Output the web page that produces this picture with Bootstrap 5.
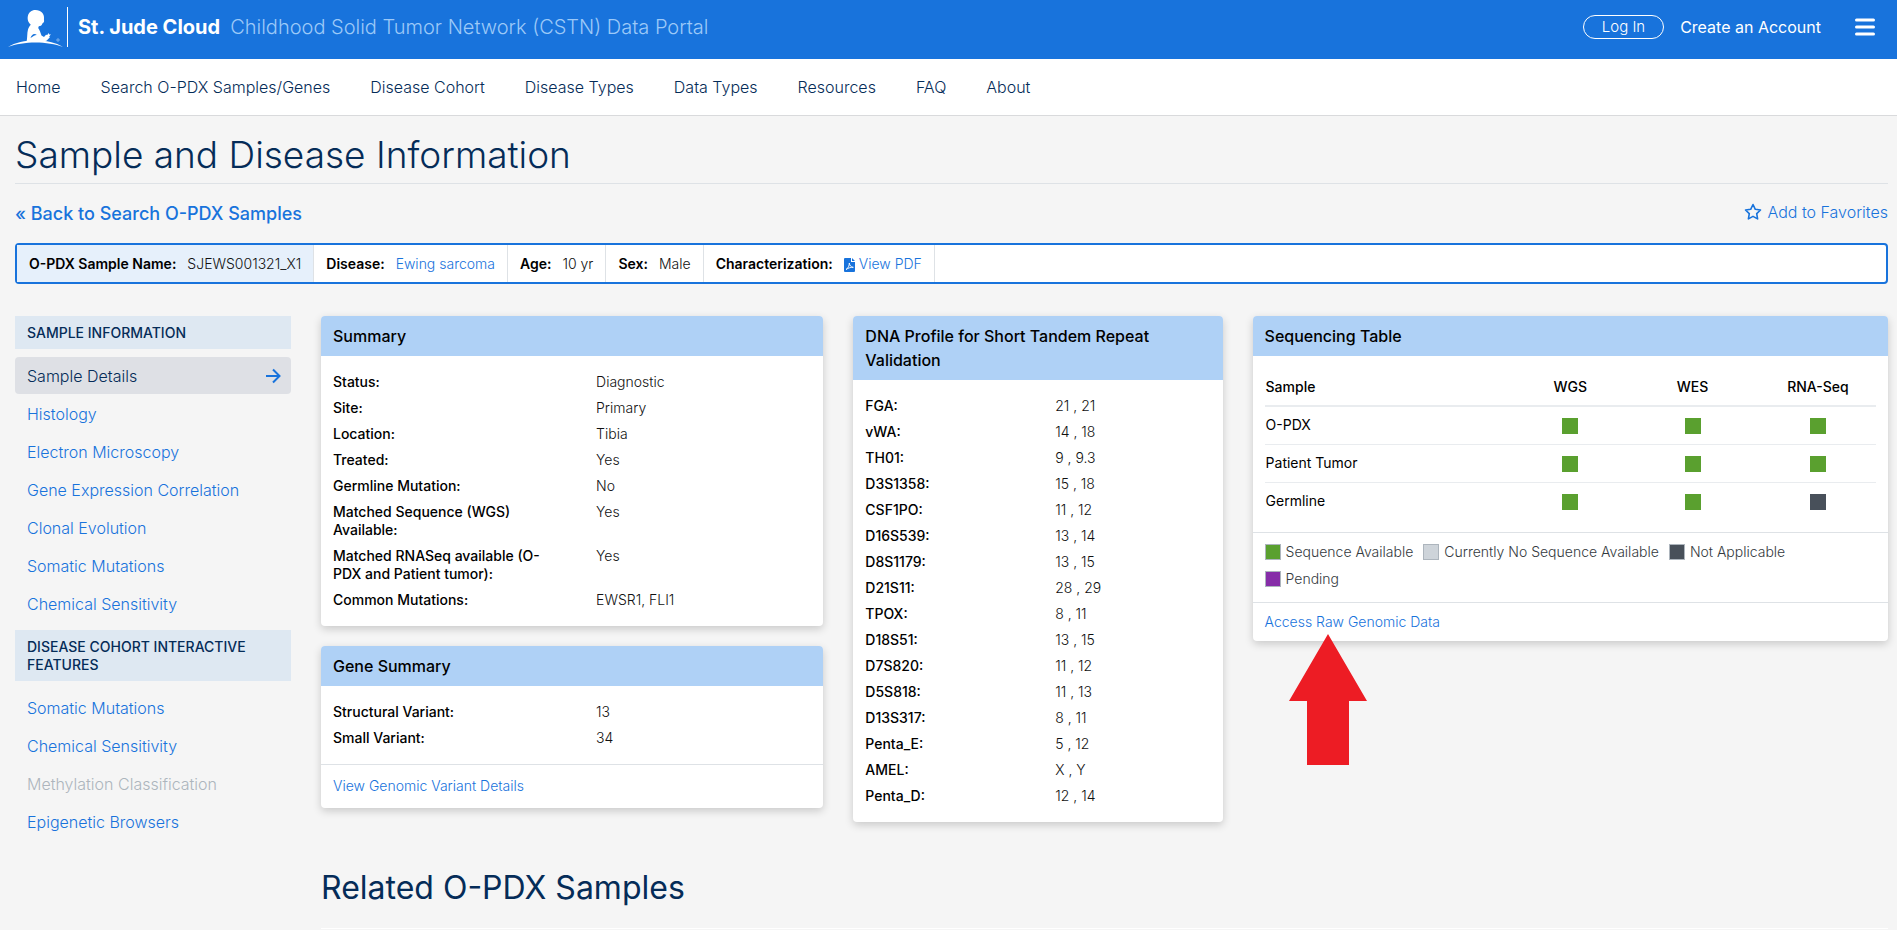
<!DOCTYPE html>
<html lang="en">
<head>
<meta charset="utf-8">
<meta name="viewport" content="width=device-width, initial-scale=1">
<title>Sample and Disease Information</title>
<link href="https://cdn.jsdelivr.net/npm/bootstrap@5.3.0/dist/css/bootstrap.min.css" rel="stylesheet">
<style>
  :root { --sj-blue: #1873dc; --sj-navy: #052c58; }
  body { font-family: Inter, "Noto Sans", sans-serif; font-weight: 300; font-size: 16px; color: #111; background: #f5f5f5; }
  a { color: var(--sj-blue); text-decoration: none; }
  .fs-card { font-size: 14px; line-height: 18px; }
  .topbar { background: var(--sj-blue); height: 59px; padding: 0 22px 5px 8px; }
  .topbar a, .topbar button { color: #fff; }
  .brand { font-size: 20px; font-weight: 700; padding-left: 10px; line-height: 40px; border-left: 1px solid #fff; }
  .brand-sub { font-size: 20px; color: #9cc9f8; margin-left: 10px; }
  .btn-login { border: 1px solid #fff; border-radius: 12px; font-size: 15px; font-weight: 300; line-height: 22px; padding: 0 18px; }
  .btn-menu { border: 0; padding: 0; line-height: 1; }
  .mainnav { height: 57px; border-bottom: 1px solid #d9dadc; padding-left: 16px; gap: 40px; }
  .mainnav a { color: var(--sj-navy); font-size: 16px; }
  .page { padding: 0 9px 0 15px; }
  .page-title { font-size: 37px; font-weight: 300; line-height: 44px; color: var(--sj-navy); padding: 17px 0 6px; margin: 0; border-bottom: 1px solid #dee2e6; }
  .back-link { font-size: 18px; font-weight: 500; line-height: 27px; }
  .fav-link { gap: 5px; line-height: 24px; }
  .samplebar { border: 2px solid var(--sj-blue); border-radius: 4px; background: #fff; margin-bottom: 32px; font-size: 14px; line-height: 21px; }
  .samplebar > div { padding: 8px 12px; border-right: 1px solid #dee2e6; }
  .samplebar > div:first-child { background: #e6f0fb; }
  .samplebar b { font-weight: 600; margin-right: 11px; color: #000; }
  .body-row { gap: 30px; }
  .side { width: 276px; flex: none; }
  .side h2 { font-size: 14px; font-weight: 500; line-height: 18px; color: var(--sj-navy); background: #dee8f2; padding: 8px 12px 7px; margin: 8px 0; }
  .side h2:first-child { margin-top: 0; }
  .side a { display: flex; align-items: center; justify-content: space-between; height: 37px; margin-bottom: 1px; padding: 0 10px 0 12px; border-radius: 4px; }
  .side a.active { background: #dee0e5; color: var(--sj-navy); }
  .side a.disabled { color: #adb5bd; }
  .panels { --bs-gutter-x: 30px; }
  .panel { border: 0; border-radius: 4px; box-shadow: 0 3px 8px rgba(0,0,0,.18); }
  .panel + .panel { margin-top: 20px; }
  .panel > .card-header { background: #afd1f6; border: 0; padding: 8px 12px; font-size: 16px; font-weight: 500; line-height: 24px; color: #000; }
  .panel > .card-header:first-child { border-radius: 4px 4px 0 0; }
  .panel > .card-body { padding: 13px 12px; }
  .panel > .seq-body { padding: 12px; }
  .panel > .card-footer { background: none; border-top: 1px solid #dee2e6; padding: 12px 12px 13px; }
  .panel > .legend { padding: 10px 80px 14px 12px; gap: 9px 10px; color: #343a40; }
  .panel > .raw-link { padding: 10px 12px; }
  .facts { margin: 0; }
  .facts > div { display: flex; padding: 4px 0; }
  .facts dt { width: 55%; padding-right: 44px; font-weight: 500; color: #000; }
  .facts dd { margin: 0; }
  .seq { width: 100%; table-layout: fixed; }
  .seq th, .seq td { height: 38px; text-align: center; vertical-align: middle; font-weight: 400; border-bottom: 1px solid #e9ecef; color: #000; }
  .seq thead th { font-weight: 500; border-bottom: 2px solid #e9ecef; }
  .seq th:first-child { text-align: left; width: 41%; }
  .seq tbody tr:last-child > td, .seq tbody tr:last-child > th { border-bottom: 0; }
  .seq .w-wgs { width: 18%; }
  .seq .w-wes { width: 22%; }
  .swatch { display: inline-block; width: 16px; height: 16px; vertical-align: middle; background: #5aa02f; }
  .swatch.na { background: #48505a; }
  .swatch.none { background: #ced4da; }
  .swatch.pend { background: #862da8; }
  .legend .swatch { border: 1px solid #adb5bd; margin-right: 5px; flex: none; }
  .pointer { position: absolute; left: 36px; top: calc(100% - 7px); }
  .related { font-size: 32px; font-weight: 400; line-height: 40px; color: var(--sj-navy); margin: 46px 0 20px; }
  .related-strip { height: 1px; background: #fff; }
</style>
</head>
<body>
<header class="topbar d-flex align-items-center">
  <a href="#" class="d-flex me-1" aria-label="St. Jude">
    <svg width="55" height="40" viewBox="0 0 55 40" fill="#fff"><path d="M27.500 3C33 3 36.500 7 36 11.500c-.2 1.500.3 2.300 0 3.300-.4 1.200-1.300 1-1.800 2.200-.5 1.500-1.800 2.200-3.400 2.200l-.6 1.800c1.600 2 2.300 5 3.300 7.500l2.500 1.500 2-2.300 1.200.2 1.600-2 .4 1.500 1.600-.2-1.600 2.500.7.600-3.400 3.400-2.500.5C31 34 24 34 18.500 35c1-4 .4-8.500 1.500-12.500.5-2 1.500-3.500 2.800-4.800C17.500 13.500 19 3 27.500 3z"/><path d="M22.500 31c.8-3.500 4-5.500 6.300-3-2.500 0-3.800 1.500-6.300 3z" fill="#1873dc"/><path d="M0 40C14 31 41 31 55 40 40 34 15 34 0 40z"/><circle cx="50" cy="33" r="1.200" fill="none" stroke="#fff" stroke-width=".6" opacity=".7"/></svg>
  </a>
  <a href="#" class="brand">St. Jude Cloud</a>
  <span class="brand-sub">Childhood Solid Tumor Network (CSTN) Data Portal</span>
  <div class="ms-auto d-flex align-items-center">
    <button class="btn btn-login me-3">Log In</button>
    <a href="#" class="fw-normal">Create an Account</a>
    <button class="btn btn-menu ms-4" aria-label="Menu"><svg width="30" height="20" viewBox="0 0 30 20" stroke="#fff" stroke-width="3" stroke-linecap="round"><path d="M11.500 3h17M11.500 10h17M11.500 17h17"/></svg></button>
  </div>
</header>
<nav class="mainnav bg-white d-flex align-items-center">
  <a href="#">Home</a><a href="#">Search O-PDX Samples/Genes</a><a href="#">Disease Cohort</a><a href="#">Disease Types</a><a href="#">Data Types</a><a href="#">Resources</a><a href="#">FAQ</a><a href="#">About</a>
</nav>
<main class="page">
  <h1 class="page-title">Sample and Disease Information</h1>
  <div class="d-flex justify-content-between align-items-start pt-3 pb-3">
    <a href="#" class="back-link">« Back to Search O-PDX Samples</a>
    <a href="#" class="fav-link d-flex align-items-center"><svg width="18" height="18" viewBox="0 0 18 18" fill="none" stroke="#1873dc" stroke-width="1.600" stroke-linejoin="round"><path d="M9 1.500l2.300 4.800 5.200.7-3.800 3.600.9 5.300L9 13.400l-4.600 2.500.9-5.300L1.500 7l5.200-.7z"/></svg>Add to Favorites</a>
  </div>
  <div class="samplebar d-flex flex-wrap">
    <div><b>O-PDX Sample Name:</b>SJEWS001321_X1</div>
    <div><b>Disease:</b><a href="#">Ewing sarcoma</a></div>
    <div><b>Age:</b>10 yr</div>
    <div><b>Sex:</b>Male</div>
    <div><b>Characterization:</b><a href="#"><svg class="me-1" width="11" height="14" viewBox="0 0 11 14"><path fill="#1873dc" d="M1 0h6v4h4v9a1 1 0 0 1-1 1H1a1 1 0 0 1-1-1V1a1 1 0 0 1 1-1zM8 0l3 3H8z"/><path d="M2 11.500c2-1 3.500-4 3.300-6.500.3 2.500 2 4.500 4 4.300-2-.3-5 .7-7.300 2.200z" fill="none" stroke="#fff" stroke-width=".9"/></svg>View PDF</a></div>
  </div>
  <div class="d-flex body-row">
    <aside class="side">
      <h2>SAMPLE INFORMATION</h2>
      <a href="#" class="active">Sample Details<svg width="16" height="16" viewBox="0 0 16 16" fill="none" stroke="#1873dc" stroke-width="2"><path d="M1 8h13M8 1.500L14.500 8 8 14.500"/></svg></a>
      <a href="#">Histology</a>
      <a href="#">Electron Microscopy</a>
      <a href="#">Gene Expression Correlation</a>
      <a href="#">Clonal Evolution</a>
      <a href="#">Somatic Mutations</a>
      <a href="#">Chemical Sensitivity</a>
      <h2>DISEASE COHORT INTERACTIVE FEATURES</h2>
      <a href="#">Somatic Mutations</a>
      <a href="#">Chemical Sensitivity</a>
      <a href="#" class="disabled" aria-disabled="true">Methylation Classification</a>
      <a href="#">Epigenetic Browsers</a>
    </aside>
    <div class="flex-grow-1">
      <div class="row panels align-items-start">
        <div class="col-4">
          <section class="card panel">
            <h2 class="card-header">Summary</h2>
            <div class="card-body fs-card">
              <dl class="facts">
                <div><dt>Status:</dt><dd>Diagnostic</dd></div>
                <div><dt>Site:</dt><dd>Primary</dd></div>
                <div><dt>Location:</dt><dd>Tibia</dd></div>
                <div><dt>Treated:</dt><dd>Yes</dd></div>
                <div><dt>Germline Mutation:</dt><dd>No</dd></div>
                <div><dt>Matched Sequence (WGS) Available:</dt><dd>Yes</dd></div>
                <div><dt>Matched RNASeq available (O-PDX and Patient tumor):</dt><dd>Yes</dd></div>
                <div><dt>Common Mutations:</dt><dd>EWSR1, FLI1</dd></div>
              </dl>
            </div>
          </section>
          <section class="card panel">
            <h2 class="card-header">Gene Summary</h2>
            <div class="card-body fs-card">
              <dl class="facts">
                <div><dt>Structural Variant:</dt><dd>13</dd></div>
                <div><dt>Small Variant:</dt><dd>34</dd></div>
              </dl>
            </div>
            <div class="card-footer fs-card"><a href="#">View Genomic Variant Details</a></div>
          </section>
        </div>
        <div class="col-3">
          <section class="card panel">
            <h2 class="card-header">DNA Profile for Short Tandem Repeat Validation</h2>
            <div class="card-body fs-card">
              <dl class="facts">
                <div><dt>FGA:</dt><dd>21 , 21</dd></div>
                <div><dt>vWA:</dt><dd>14 , 18</dd></div>
                <div><dt>TH01:</dt><dd>9 , 9.3</dd></div>
                <div><dt>D3S1358:</dt><dd>15 , 18</dd></div>
                <div><dt>CSF1PO:</dt><dd>11 , 12</dd></div>
                <div><dt>D16S539:</dt><dd>13 , 14</dd></div>
                <div><dt>D8S1179:</dt><dd>13 , 15</dd></div>
                <div><dt>D21S11:</dt><dd>28 , 29</dd></div>
                <div><dt>TPOX:</dt><dd>8 , 11</dd></div>
                <div><dt>D18S51:</dt><dd>13 , 15</dd></div>
                <div><dt>D7S820:</dt><dd>11 , 12</dd></div>
                <div><dt>D5S818:</dt><dd>11 , 13</dd></div>
                <div><dt>D13S317:</dt><dd>8 , 11</dd></div>
                <div><dt>Penta_E:</dt><dd>5 , 12</dd></div>
                <div><dt>AMEL:</dt><dd>X , Y</dd></div>
                <div><dt>Penta_D:</dt><dd>12 , 14</dd></div>
              </dl>
            </div>
          </section>
        </div>
        <div class="col-5">
          <section class="card panel">
            <h2 class="card-header">Sequencing Table</h2>
            <div class="card-body seq-body fs-card">
              <table class="seq">
                <thead><tr><th>Sample</th><th class="w-wgs">WGS</th><th class="w-wes">WES</th><th>RNA-Seq</th></tr></thead>
                <tbody>
                  <tr><th>O-PDX</th><td><span class="swatch"></span></td><td><span class="swatch"></span></td><td><span class="swatch"></span></td></tr>
                  <tr><th>Patient Tumor</th><td><span class="swatch"></span></td><td><span class="swatch"></span></td><td><span class="swatch"></span></td></tr>
                  <tr><th>Germline</th><td><span class="swatch"></span></td><td><span class="swatch"></span></td><td><span class="swatch na"></span></td></tr>
                </tbody>
              </table>
            </div>
            <div class="card-footer fs-card d-flex flex-wrap legend">
              <span class="d-flex align-items-center"><i class="swatch"></i>Sequence Available</span>
              <span class="d-flex align-items-center"><i class="swatch none"></i>Currently No Sequence Available</span>
              <span class="d-flex align-items-center"><i class="swatch na"></i>Not Applicable</span>
              <span class="d-flex align-items-center"><i class="swatch pend"></i>Pending</span>
            </div>
            <div class="card-footer fs-card raw-link"><a href="#">Access Raw Genomic Data</a></div>
            <svg class="pointer" width="78" height="131" viewBox="0 0 78 131" fill="#ed1c24"><path d="M39 0L78 67H60v64H18V67H0z"/></svg>
          </section>
        </div>
      </div>
      <h2 class="related">Related O-PDX Samples</h2>
      <div class="related-strip"></div>
    </div>
  </div>
</main>
<script src="https://cdn.jsdelivr.net/npm/bootstrap@5.3.0/dist/js/bootstrap.bundle.min.js"></script>
</body>
</html>
